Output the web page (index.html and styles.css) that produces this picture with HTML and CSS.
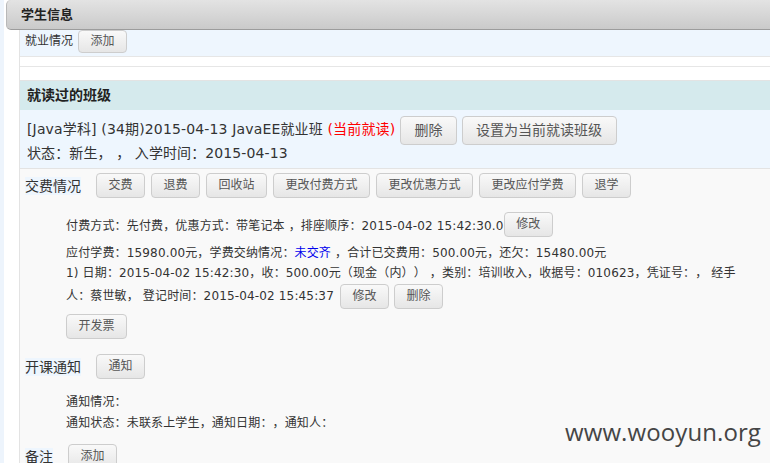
FILE: index.html
```html
<!DOCTYPE html>
<html lang="zh-CN">
<head>
<meta charset="utf-8">
<title>学生信息</title>
<link rel="stylesheet" href="styles.css">
</head>
<body>
<div class="page">
  <div class="panel-head">学生信息</div>
  <div class="content">
    <div class="job-row"><span class="label">就业情况</span><button class="btn btn-job">添加</button></div>
    <div class="empty-box"></div>

    <div class="section-head">就读过的班级</div>
    <div class="class-info">
      <div class="class-title">[Java学科] (34期)2015-04-13 JavaEE就业班 <span class="red">(当前就读)</span> <button class="btn btn-lg">删除</button> <button class="btn btn-lg">设置为当前就读班级</button></div>
      <div class="class-status">状态：新生，&nbsp;，&nbsp;入学时间：2015-04-13</div>
    </div>

    <div class="class-body">
      <div class="toolbar">
        <span class="label">交费情况</span>
        <div class="btns">
          <button class="btn">交费</button>
          <button class="btn">退费</button>
          <button class="btn">回收站</button>
          <button class="btn">更改付费方式</button>
          <button class="btn">更改优惠方式</button>
          <button class="btn">更改应付学费</button>
          <button class="btn">退学</button>
        </div>
      </div>

      <div class="detail">
        <div class="pay-line"><span>付费方式：先付费，优惠方式：带笔记本 ，排座顺序：2015-04-02 15:42:30.0</span><button class="btn">修改</button></div>
        <div class="fee-line">应付学费：15980.00元，学费交纳情况：<span class="blue">未交齐</span> ，合计已交费用：500.00元，还欠：15480.00元</div>
        <div class="record">1) 日期：2015-04-02 15:42:30，收：500.00元（现金（内））&nbsp;，类别：培训收入，收据号：010623，凭证号：， 经手人：蔡世敏， 登记时间：2015-04-02 15:45:37 <button class="btn">修改</button> <button class="btn">删除</button></div>
        <button class="btn btn-invoice">开发票</button>
      </div>

      <div class="toolbar notice-bar">
        <span class="label">开课通知</span>
        <div class="btns"><button class="btn">通知</button></div>
      </div>
      <div class="detail notice">
        <div class="notice-line">通知情况：</div>
        <div class="notice-line">通知状态：未联系上学生，通知日期：，通知人：</div>
      </div>

      <div class="toolbar remark-bar">
        <span class="label">备注</span>
        <div class="btns"><button class="btn">添加</button></div>
      </div>
    </div>
  </div>
  <div class="watermark">www.wooyun.org</div>
</div>
</body>
</html>
```

FILE: styles.css
```css
html, body {
  margin: 0;
  padding: 0;
  background: #ffffff;
  overflow: hidden;
}

body {
  font-family: "DejaVu Sans", "Noto Sans CJK SC", sans-serif;
  font-size: 14px;
  color: #333;
  text-spacing-trim: space-all;
}

.page {
  position: relative;
  min-height: 463px;
  border-left: 4px solid #edf4fc;
  overflow: hidden;
}

.panel-head {
  margin-left: 2px;
  height: 29px;
  line-height: 29px;
  padding-left: 14px;
  font-size: 13px;
  font-weight: bold;
  color: #222;
  background: linear-gradient(#e3e3e3, #cacaca);
  border: 1px solid #b8b8b8;
  border-bottom-color: #9c9c9c;
  border-right: none;
  border-top: none;
  border-radius: 5px 0 0 5px;
}

.content {
  margin-left: 15px;
  border-left: 1px solid #e3e3e3;
  min-height: 440px;
}

.label {
  background: #eef6fe;
  line-height: 18px;
}

.btn {
  font-family: "DejaVu Sans", "Noto Sans CJK SC", sans-serif;
  font-size: 12px;
  color: #555;
  height: 25px;
  padding: 0 11.5px;
  line-height: 23px;
  background: linear-gradient(#f9f9f9, #e6e6e6);
  border: 1px solid #cdcdcd;
  border-radius: 4px;
  margin: 0;
  letter-spacing: 0;
  cursor: pointer;
}

.btn-lg {
  font-size: 14px;
  height: 29px;
  line-height: 27px;
  padding: 0 13.5px;
  vertical-align: middle;
}

.job-row {
  display: flex;
  align-items: flex-start;
  gap: 5px;
  height: 26px;
  padding-left: 5px;
  background: #eef6fe;
  border-bottom: 1px solid #e6e6e6;
}

.job-row .label {
  font-size: 12px;
  line-height: 22px;
}

.btn-job {
  height: 23px;
  line-height: 21px;
}

.empty-box {
  height: 9px;
  background: #fff;
  border-bottom: 1px solid #e6e6e6;
  margin-bottom: 13px;
}

.section-head {
  height: 29px;
  line-height: 29px;
  padding-left: 7px;
  font-size: 14px;
  font-weight: bold;
  color: #222;
  background: #d5eaed;
  border-top: 1px solid #e3e3e3;
}

.class-info {
  background: #eef6fe;
  padding: 5px 0 6px 7px;
  border-bottom: 1px solid #e3e3e3;
}

.class-title {
  height: 29px;
  line-height: 29px;
  white-space: nowrap;
  letter-spacing: 0.15px;
}

.red {
  color: #ff0000;
}

.blue {
  color: #0000ee;
}

.class-status {
  line-height: 18px;
  letter-spacing: 0.1px;
}

.class-body {
  background: #f9f9f9;
  padding: 4px 0 20px 5px;
}

.toolbar {
  display: flex;
  align-items: center;
  gap: 15px;
}

.btns {
  display: flex;
  gap: 6px;
}

.detail {
  padding-left: 41px;
  padding-right: 18px;
  font-size: 12px;
  letter-spacing: 0.15px;
}

.pay-line {
  display: flex;
  align-items: center;
  height: 26px;
  margin-top: 13px;
}

.fee-line {
  margin-top: 6px;
  line-height: 20px;
}

.record {
  line-height: 21px;
}

.record .btn {
  vertical-align: middle;
  margin-left: 2px;
}

.record .btn + .btn {
  margin-left: 1px;
}

.btn-invoice {
  display: block;
  margin-top: 5px;
}

.notice-bar {
  margin-top: 15px;
}

.notice {
  margin-top: 13px;
}

.notice-line {
  line-height: 21px;
}

.remark-bar {
  margin-top: 10px;
}

.watermark {
  position: absolute;
  right: 9px;
  top: 415px;
  font-family: "Open Sans", "Noto Sans", sans-serif;
  font-size: 24px;
  letter-spacing: 0.1px;
  color: #454545;
}
```
